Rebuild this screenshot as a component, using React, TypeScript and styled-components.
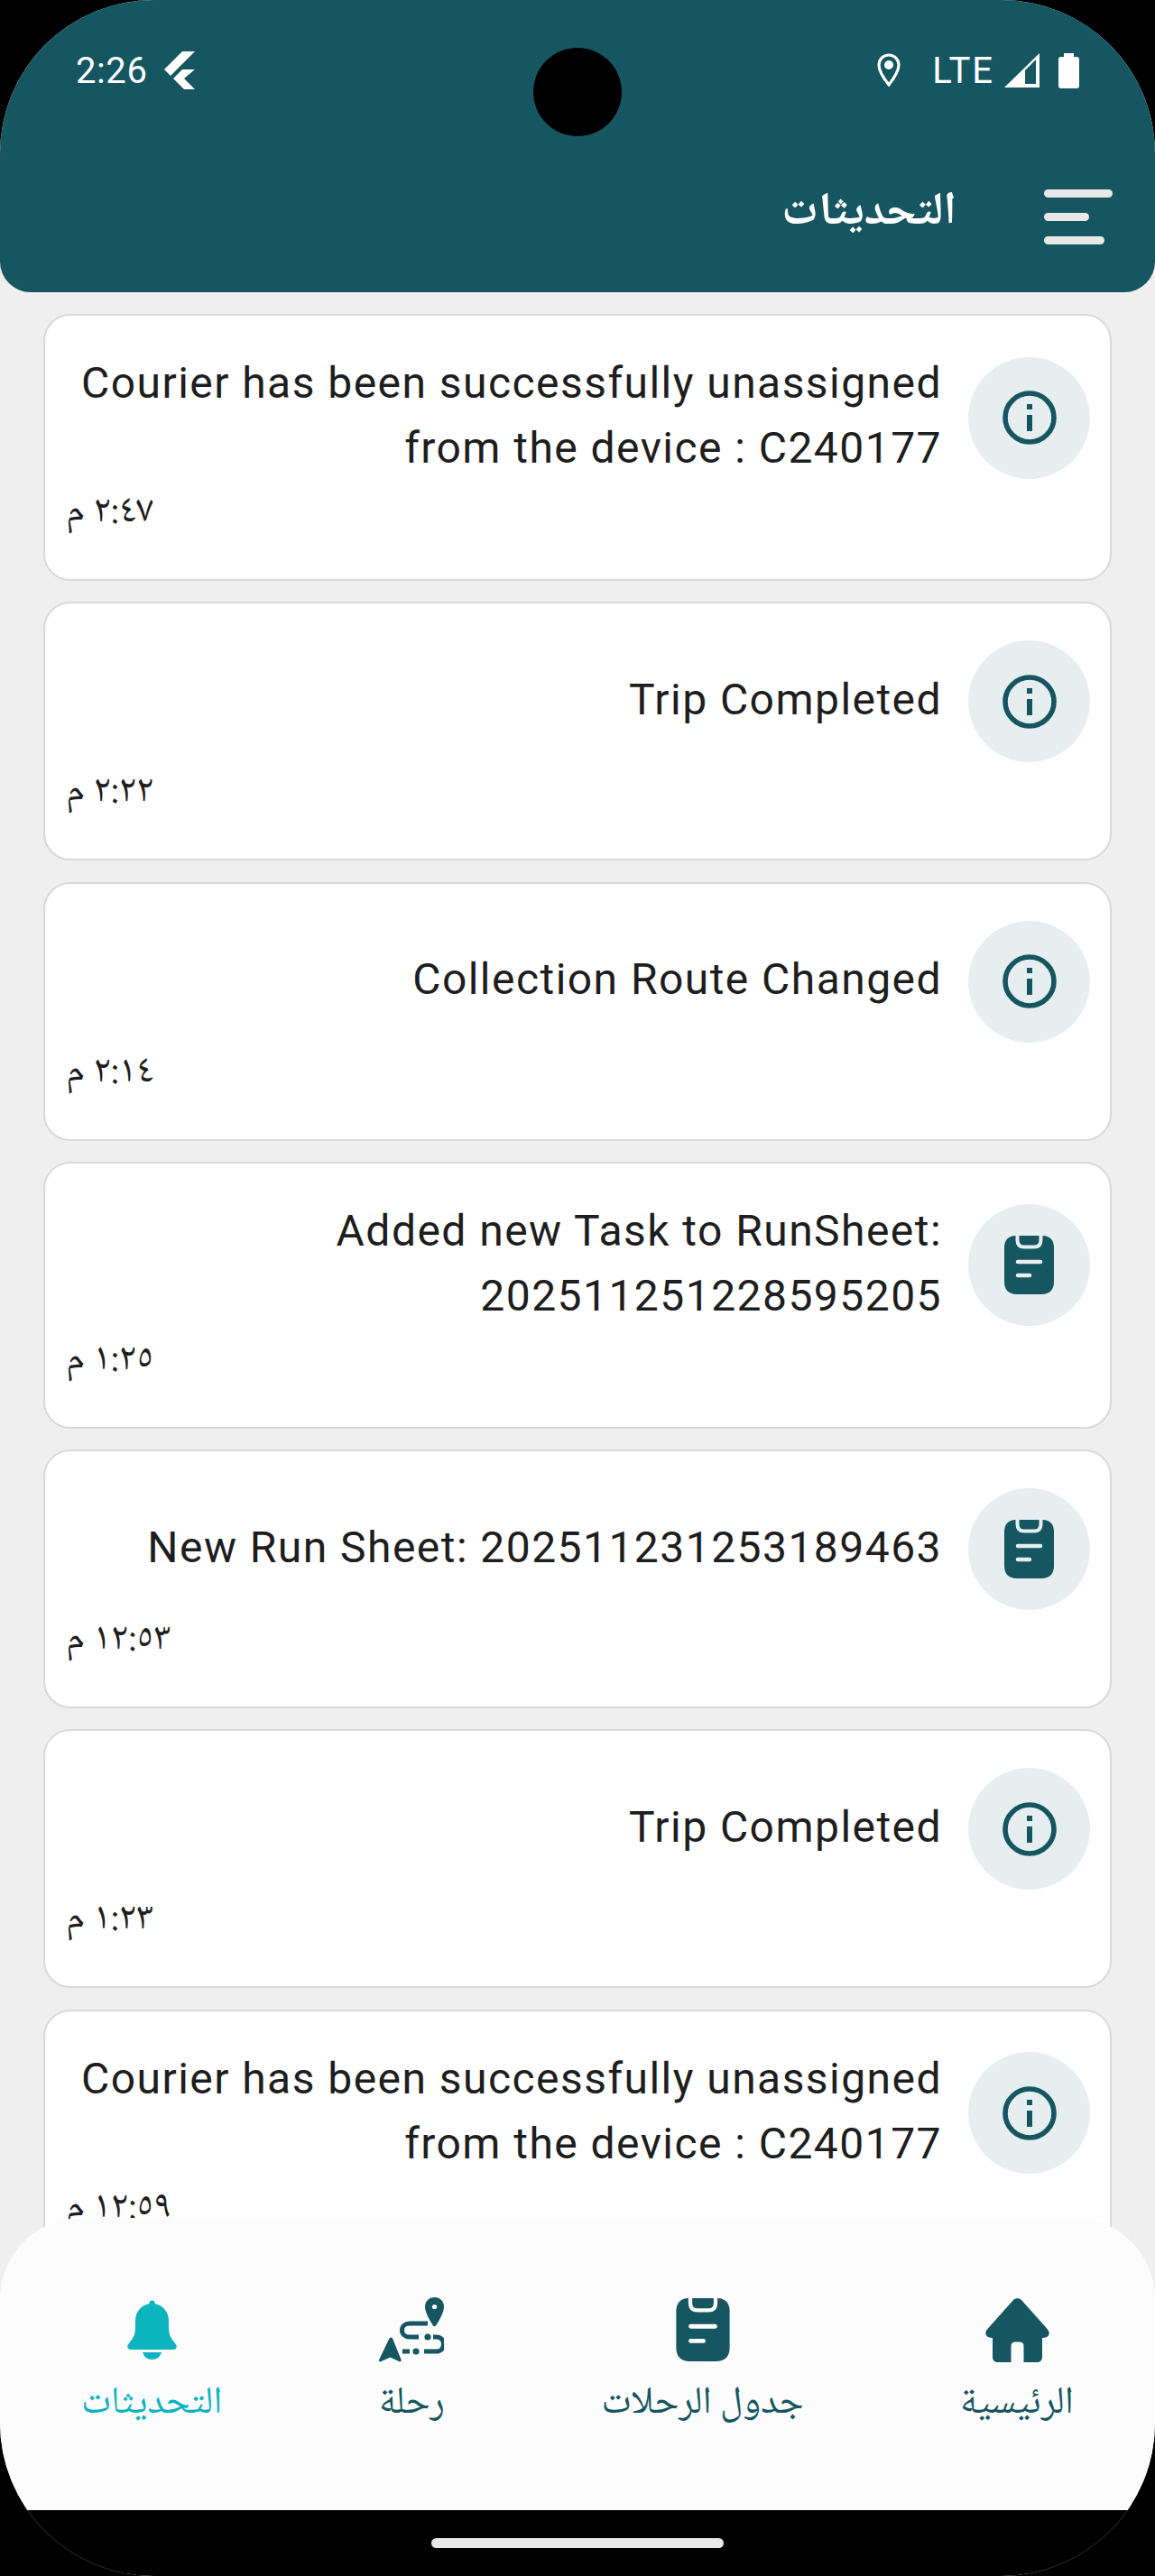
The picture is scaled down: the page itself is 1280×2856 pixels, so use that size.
import React from "react";
import styled, { createGlobalStyle } from "styled-components";

const TEAL = "#165661";
const CYAN = "#0CB4C0";
const ARABIC = `"Noto Naskh Arabic", "Noto Sans Arabic", "DejaVu Sans", sans-serif`;

const Global = createGlobalStyle`
  html, body { margin: 0; padding: 0; background: #000; }
  * { box-sizing: border-box; }
`;

const Screen = styled.div`
  position: relative;
  width: 1280px;
  height: 2856px;
  display: flex;
  flex-direction: column;
  background: #efefef;
  border-radius: 170px;
  overflow: hidden;
  font-family: Roboto, sans-serif;
`;

const Header = styled.header`
  flex: none;
  height: 324px;
  background: ${TEAL};
  border-radius: 0 0 34px 34px;
  padding: 54px 47px 0 84px;
  display: flex;
  flex-direction: column;
`;

const StatusBar = styled.div`
  display: flex;
  align-items: center;
  height: 48px;
  padding-right: 37px;
  color: #fff;
  font-size: 40px;
`;

const Clock = styled.span`
  margin-right: 18px;
  letter-spacing: 0.6px;
`;

const StatusRight = styled.div`
  margin-left: auto;
  display: flex;
  align-items: center;
`;

const Lte = styled.span`
  margin: 0 11px 0 35px;
  letter-spacing: 2px;
`;

const Battery = styled.svg`
  margin-left: 21px;
`;

const Punch = styled.div`
  position: absolute;
  left: 591px;
  top: 53px;
  width: 98px;
  height: 98px;
  border-radius: 50%;
  background: #000;
`;

const TitleBar = styled.div`
  direction: rtl;
  display: flex;
  align-items: center;
  gap: 97px;
  margin-top: 108px;
  height: 60px;
`;

const Menu = styled.div`
  display: flex;
  flex-direction: column;
  gap: 17px;
  width: 76px;
`;

const MenuBar = styled.span<{ $w: number }>`
  display: block;
  height: 9px;
  width: ${(p) => p.$w}px;
  border-radius: 5px;
  background: #e8e8e8;
  align-self: flex-end;
`;

const Title = styled.h1`
  margin: -3px 0 3px;
  color: #fff;
  font-family: ${ARABIC};
  font-size: 51px;
  line-height: 60px;
  font-weight: 700;
`;

const List = styled.main`
  flex: 1;
  min-height: 0;
  overflow: hidden;
  padding: 24px 48px 0;
  display: flex;
  flex-direction: column;
  gap: 23.3px;
`;

const Card = styled.article`
  flex: none;
  background: #fff;
  border: 2px solid #d9d9d9;
  border-radius: 30px;
  padding: 41px 22px 51px 23px;
`;

const Row = styled.div`
  display: flex;
  align-items: center;
  gap: 29px;
`;

const Message = styled.p`
  flex: 1;
  margin: -2px 0 2px;
  text-align: right;
  font-size: 48px;
  line-height: 72px;
  letter-spacing: 1.45px;
  color: #1e1e20;
`;

const IconCircle = styled.div`
  flex: none;
  width: 135px;
  height: 135px;
  border-radius: 50%;
  background: #e6eef0;
  display: flex;
  align-items: center;
  justify-content: center;
`;

const Time = styled.div`
  direction: rtl;
  text-align: left;
  margin-top: 12px;
  height: 44px;
  font-family: ${ARABIC};
  font-size: 43px;
  line-height: 44px;
  color: #1e1e20;
`;

const Nav = styled.nav`
  position: relative;
  flex: none;
  height: 324px;
  margin-top: -90px;
  background: #fcfcfc;
  border-radius: 90px 90px 0 0;
  direction: rtl;
  padding: 88px 90px 0;
  display: flex;
  justify-content: space-between;
`;

const NavItem = styled.div<{ $active?: boolean }>`
  display: flex;
  flex-direction: column;
  align-items: center;
  color: ${(p) => (p.$active ? CYAN : TEAL)};
`;

const NavIconBox = styled.div`
  height: 72px;
  display: flex;
  align-items: center;
  justify-content: center;
`;

const NavLabel = styled.span`
  margin-top: 22px;
  font-family: ${ARABIC};
  font-size: 42.5px;
  line-height: 50px;
  white-space: nowrap;
`;

const HomeBar = styled.div`
  flex: none;
  height: 73px;
  background: #000;
  display: flex;
  justify-content: center;
  padding-top: 31px;
`;

const Handle = styled.span`
  display: block;
  width: 324px;
  height: 11px;
  border-radius: 6px;
  background: #e8e8e8;
`;

const InfoIcon = () => (
  <svg width="60" height="60" viewBox="0 0 60 60" fill="none">
    <circle cx="30" cy="30" r="27" stroke={TEAL} strokeWidth="5.6" />
    <rect x="27" y="15" width="6" height="6" fill={TEAL} />
    <rect x="27" y="27" width="6" height="18" fill={TEAL} />
  </svg>
);

const ClipIcon = ({ line, w = 55, h = 65 }: { line: string; w?: number; h?: number }) => (
  <svg width={w} height={h} viewBox="0 0 55 65">
    <path
      d="M12 0H43C50 0 55 5 55 13V51C55 60 50 65 41 65H14C5 65 0 60 0 51V13C0 5 5 0 12 0Z"
      fill={TEAL}
    />
    <path
      d="M14.5 -2V5C14.5 10 17 12.5 22 12.5H33C38 12.5 40.5 10 40.5 5V-2"
      fill="none"
      stroke={line}
      strokeWidth="4"
    />
    <path d="M15 29H40M15 44H28" stroke={line} strokeWidth="4.5" strokeLinecap="round" />
  </svg>
);

const HomeIcon = () => (
  <svg width="71" height="71" viewBox="0 0 71 71" fill={TEAL}>
    <path d="M31 2C33.5 -.5 37.5 -.5 40 2L68.5 34C73 39 70 44 64 44H63V65C63 69 60.5 71 57 71H42.5V53C42.5 50 41 48.500 38 48.500H33C30 48.500 28.500 50 28.500 53V71H14C10.500 71 8 69 8 65V44H7C1 44 -2 39 2.500 34Z" />
  </svg>
);

const BellIcon = () => (
  <svg width="55" height="66" viewBox="0 0 55 66" fill={CYAN}>
    <circle cx="27.500" cy="3.500" r="3" />
    <path d="M27.500 4C38 4 46 12 46 23V31C46 39 49 43 53 48C56 51 55 55 51 55H4C0 55 -1 51 2 48C6 43 9 39 9 31V23C9 12 17 4 27.500 4Z" />
    <path d="M17 58H38C36.500 63 32.500 66 27.500 66C22.500 66 18.500 63 17 58Z" />
  </svg>
);

const RouteIcon = () => (
  <svg width="72" height="72" viewBox="0 0 72 72" fill="none">
    <path
      d="M61.500 0C67.500 0 72 4.500 72 10.500C72 17 66 27 63 31.500C62.300 32.500 60.700 32.500 60 31.500C57 27 51 17 51 10.500C51 4.500 55.500 0 61.500 0Z"
      fill={TEAL}
    />
    <circle cx="61.500" cy="10.500" r="2.600" fill="#fcfcfc" />
    <path d="M11.500 45.500C12.500 44 14 44 15 45.500L24.500 69C25 71 23.500 72 22 71L12.500 66.500L2.500 71C1 72 -.5 71 .2 69Z" fill={TEAL} />
    <path
      d="M54 29H34C29 29 25.500 32 25.500 36.500C25.500 41 29 44 34 44H44M60 44H63.500C68.500 44 71.500 47.500 71.500 52C71.500 56.500 68.500 60 63.500 60H50M26 60H34"
      stroke={TEAL}
      strokeWidth="5"
    />
    <circle cx="54" cy="44" r="3.600" fill={TEAL} />
    <circle cx="41" cy="60" r="3.600" fill={TEAL} />
  </svg>
);

const cards: { text: string; time: string; kind: "info" | "clip" }[] = [
  { text: "Courier has been successfully unassigned from the device : C240177", time: "٢:٤٧ م", kind: "info" },
  { text: "Trip Completed", time: "٢:٢٢ م", kind: "info" },
  { text: "Collection Route Changed", time: "٢:١٤ م", kind: "info" },
  { text: "Added new Task to RunSheet: 202511251228595205", time: "١:٢٥ م", kind: "clip" },
  { text: "New Run Sheet: 202511231253189463", time: "١٢:٥٣ م", kind: "clip" },
  { text: "Trip Completed", time: "١:٢٣ م", kind: "info" },
  { text: "Courier has been successfully unassigned from the device : C240177", time: "١٢:٥٩ م", kind: "info" },
];

export default function App() {
  return (
    <>
      <Global />
      <Screen>
        <Header>
          <StatusBar>
            <Clock>2:26</Clock>
            <svg width="34" height="42" viewBox="0 0 34 42" fill="#fff">
              <path d="M34 0H20L0 20L7 27Z" />
              <path d="M34 20H20L10 30L22 42H34L22 30Z" />
            </svg>
            <StatusRight>
              <svg width="26" height="38" viewBox="0 0 26 38" fill="none">
                <path d="M13 2C7 2 2 6.500 2 13C2 20 9 30 13 35C17 30 24 20 24 13C24 6.500 19 2 13 2Z" stroke="#fff" strokeWidth="3.200" />
                <circle cx="13" cy="13" r="5" fill="#fff" />
              </svg>
              <Lte>LTE</Lte>
              <svg width="39" height="38" viewBox="0 0 39 38" fill="#fff" fillRule="evenodd">
                <path d="M39 0L0 38H39ZM23 19V34H35V7Z" />
              </svg>
              <Battery width="23" height="39" viewBox="0 0 23 39" fill="#fff">
                <path d="M6 0H17V4H20C22 4 23 5 23 7V36C23 38 22 39 20 39H3C1 39 0 38 0 36V7C0 5 1 4 3 4H6Z" />
              </Battery>
            </StatusRight>
          </StatusBar>
          <TitleBar>
            <Menu>
              <MenuBar $w={76} />
              <MenuBar $w={50} />
              <MenuBar $w={67} />
            </Menu>
            <Title>التحديثات</Title>
          </TitleBar>
        </Header>
        <Punch />
        <List>
          {cards.map((c, i) => (
            <Card key={i}>
              <Row>
                <Message>{c.text}</Message>
                <IconCircle>{c.kind === "info" ? <InfoIcon /> : <ClipIcon line="#e6eef0" />}</IconCircle>
              </Row>
              <Time>{c.time}</Time>
            </Card>
          ))}
        </List>
        <Nav>
          <NavItem>
            <NavIconBox><HomeIcon /></NavIconBox>
            <NavLabel>الرئيسية</NavLabel>
          </NavItem>
          <NavItem>
            <NavIconBox><ClipIcon line="#fcfcfc" w={60} h={70} /></NavIconBox>
            <NavLabel>جدول الرحلات</NavLabel>
          </NavItem>
          <NavItem>
            <NavIconBox><RouteIcon /></NavIconBox>
            <NavLabel>رحلة</NavLabel>
          </NavItem>
          <NavItem $active>
            <NavIconBox><BellIcon /></NavIconBox>
            <NavLabel>التحديثات</NavLabel>
          </NavItem>
        </Nav>
        <HomeBar><Handle /></HomeBar>
      </Screen>
    </>
  );
}
